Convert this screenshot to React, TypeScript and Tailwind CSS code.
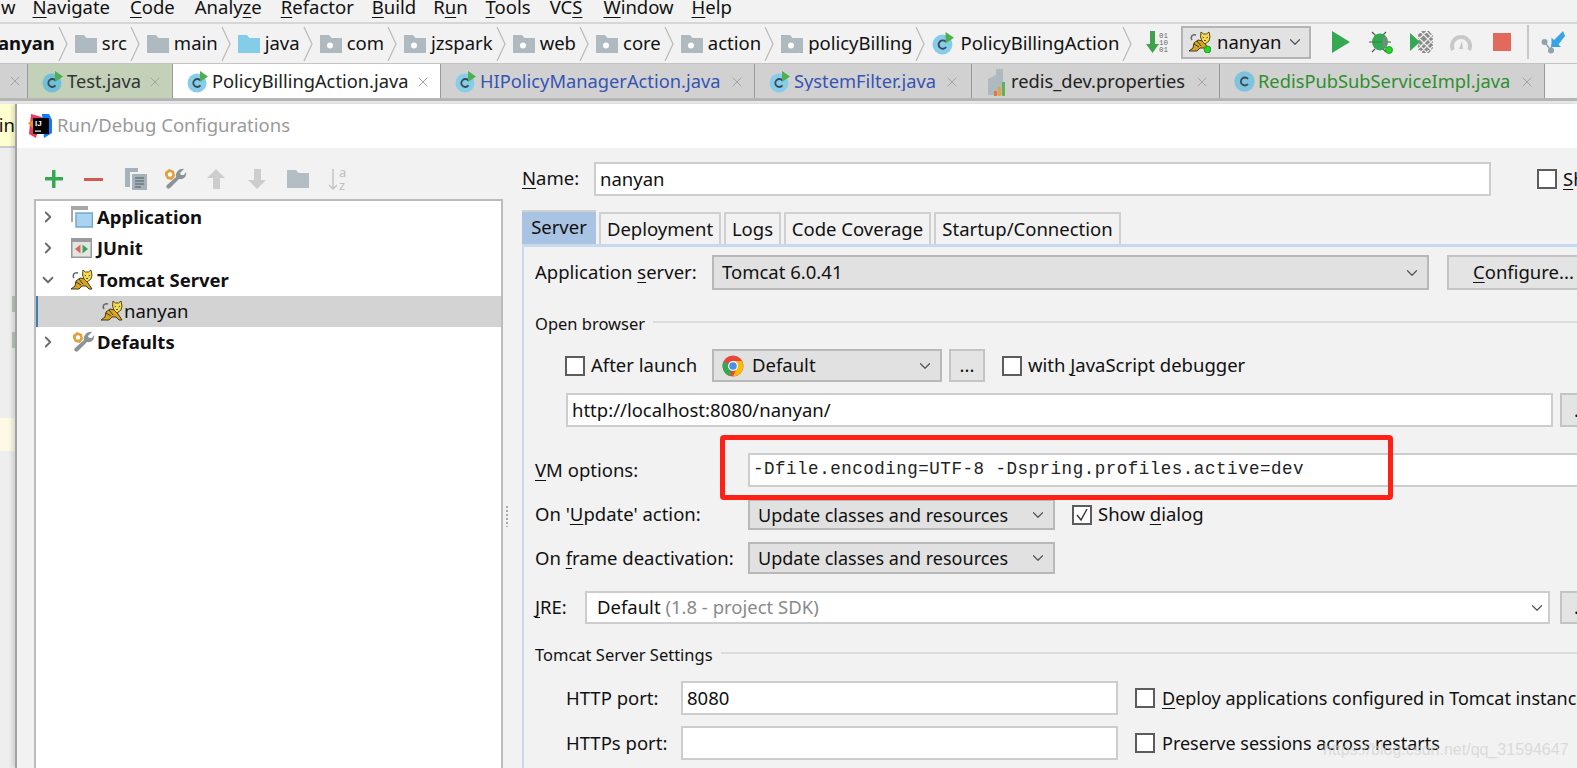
import type { ReactNode } from "react";
import { ChevronDown, ChevronRight, X } from "lucide-react";

const Mn = ({ children }: { children: ReactNode }) => <span className="underline decoration-1 underline-offset-[3px]">{children}</span>;

const ClassIcon = ({ size = 22, muted = false }: { size?: number; muted?: boolean }) => (
    <svg width={size} height={size} viewBox="0 0 22 22" className="shrink-0">
        <circle cx="10" cy="12" r="9.5" fill={muted ? "#6fc0d8" : "#85cdea"} />
        <path d="M13.5 9.6a4 4 0 1 0 0 4.8" fill="none" stroke="#3c4a52" strokeWidth="1.8" />
        <path d="M13 0l8 5.5-8 5.5z" fill="#4caf50" />
    </svg>
);

const PlainClassIcon = () => (
    <svg width="21" height="21" viewBox="0 0 21 21" className="shrink-0">
        <circle cx="10.5" cy="10.5" r="10.2" fill="#7fc4de" />
        <path d="M14 8a4 4 0 1 0 0 5" fill="none" stroke="#3c4a52" strokeWidth="1.8" />
    </svg>
);

const Folder = ({ color = "#aeb9c0" }: { color?: string }) => (
    <svg width="22" height="18" viewBox="0 0 22 18" className="shrink-0">
        <path d="M0 0h9l2.5 3H22v15H0z" fill={color} />
    </svg>
);

const PackageFolder = () => (
    <svg width="22" height="18" viewBox="0 0 22 18" className="shrink-0">
        <path d="M0 0h9l2.5 3H22v15H0z" fill="#aeb9c0" />
        <circle cx="10" cy="10.5" r="3" fill="#fff" />
    </svg>
);

const Tomcat = ({ badge = false }: { badge?: boolean }) => (
    <svg width="22" height="22" viewBox="0 0 22 22" className="shrink-0">
        <path d="M3 9C1 6 3 3 7 4" fill="none" stroke="#666" strokeWidth="1.5" />
        <path d="M0 20l4-3 1-5 4-3 5 1 3 4 4 6h-3l-3-3-4 0-3 3z" fill="#d9a521" stroke="#40391c" strokeWidth="1" />
        <path d="M5 13l5 3M8 10l4 5" stroke="#40391c" strokeWidth="1" />
        <path d="M12 1l2.500 2h3L20 1l1 5-1 4-4 3-3-3-1.500-4z" fill="#f6dc55" stroke="#5a4a10" strokeWidth="1" />
        <path d="M13.500 6l1.500 1M19 6l-1.500 1M15 9.500h2" stroke="#5a4a10" strokeWidth="1" />
        {badge && <circle cx="18.5" cy="18.5" r="3.4" fill="#22d822" stroke="#1a8a1a" strokeWidth="0.8" />}
    </svg>
);

const Wrench = () => (
    <svg width="24" height="24" viewBox="0 0 24 24" className="shrink-0">
        <path d="M21 2l-4 4 1 2 3 0 2-3c1 4-2 8-7 7L7 21c-2 2-5-1-3-3l9-8c-1-4 3-9 8-8z" fill="#8b9298" />
        <path d="M2 5l4-3 5 2 1 5-3 4-5-1-2-4z" fill="#e0a13d" />
        <circle cx="7" cy="7.5" r="2.2" fill="#fff" />
    </svg>
);

const Crumb = ({ icon, label, bold = false }: { icon?: ReactNode; label: string; bold?: boolean }) => (
    <div className="flex shrink-0 items-center">
        {icon}
        <span className={bold ? "ml-[5px] font-bold" : "ml-[5px]"}>{label}</span>
        <svg width="10" height="36" viewBox="0 0 10 36" className="mr-[7px] ml-[3px] shrink-0">
            <path d="M1 1l8 17-8 17" fill="none" stroke="#b9b9b9" strokeWidth="1.2" />
        </svg>
    </div>
);

const EditorTab = ({ width, bg = "bg-[#d1d1d1]", color = "text-[#222]", icon, label }: { width: string; bg?: string; color?: string; icon: ReactNode; label: string }) => (
    <div className={`flex h-full shrink-0 items-center border-r border-r-[#9a9a9a] pt-[1px] pl-[14px] ${width} ${bg}`}>
        {icon}
        <span className={`ml-[3px] whitespace-nowrap ${color}`}>{label}</span>
        <X size={16} strokeWidth={1.5} className="mr-[9px] ml-auto shrink-0 text-[#a4a4a4]" />
    </div>
);

const Checkbox = ({ checked = false }: { checked?: boolean }) => (
    <span className="flex h-[20px] w-[20px] shrink-0 items-center justify-center border-2 border-[#5c5c5c] bg-white">
        {checked && (
            <svg width="14" height="14" viewBox="0 0 14 14">
                <path d="M2 7l4 5 6-11" fill="none" stroke="#333" strokeWidth="1.4" />
            </svg>
        )}
    </span>
);

const Combo = ({ width, height, children }: { width: string; height: string; children: ReactNode }) => (
    <div className={`flex shrink-0 items-center justify-between border-2 border-[#b8b8b8] bg-[#e1e1e1] pr-[6px] pl-[8px] ${width} ${height}`}>
        <div className="flex items-center whitespace-nowrap">{children}</div>
        <ChevronDown size={18} strokeWidth={1.6} className="shrink-0 text-[#555]" />
    </div>
);

const TextBox = ({ className, children }: { className: string; children?: ReactNode }) => (
    <div className={`flex shrink-0 items-center border-2 border-[#cdcdcd] bg-white pl-[4px] whitespace-nowrap ${className}`}>{children}</div>
);

const GrayButton = ({ className, children }: { className: string; children: ReactNode }) => (
    <div className={`flex shrink-0 items-center border-2 border-[#c4c4c4] bg-[#e4e4e4] ${className}`}>{children}</div>
);

const SectionTitle = ({ title, className }: { title: string; className: string }) => (
    <div className={`flex h-[24px] shrink-0 items-center ${className}`}>
        <span className="text-[16.5px] whitespace-nowrap">{title}</span>
        <div className="mt-[-4px] ml-[8px] h-[2px] flex-1 bg-[#dcdcdc]" />
    </div>
);

const TreeRow = ({ open, icon, label }: { open: boolean; icon: ReactNode; label: string }) => (
    <div className="flex h-[31.5px] items-center pl-[3px]">
        {open ? <ChevronDown size={18} strokeWidth={2.4} className="text-[#6a6a6a]" /> : <ChevronRight size={18} strokeWidth={2.4} className="text-[#6a6a6a]" />}
        <div className="ml-[14px] flex w-[26px] justify-start">{icon}</div>
        <span className="font-bold">{label}</span>
    </div>
);

export default function App() {
    return (
        <div className="relative flex h-[768px] w-[1577px] flex-col overflow-hidden bg-[#f2f2f2] font-['Noto_Sans',sans-serif] text-[18.5px] leading-none text-[#111]">
            {/* menu bar */}
            <div className="flex h-[22px] shrink-0 items-center overflow-hidden pb-[7px] pl-[1px] whitespace-nowrap">
                <span>w</span>
                <span className="ml-[17px]"><Mn>N</Mn>avigate</span>
                <span className="ml-[20px]"><Mn>C</Mn>ode</span>
                <span className="ml-[20px]">Analy<Mn>z</Mn>e</span>
                <span className="ml-[19px]"><Mn>R</Mn>efactor</span>
                <span className="ml-[18px]"><Mn>B</Mn>uild</span>
                <span className="ml-[17px]">R<Mn>u</Mn>n</span>
                <span className="ml-[18px]"><Mn>T</Mn>ools</span>
                <span className="ml-[19px]">VC<Mn>S</Mn></span>
                <span className="ml-[21px]"><Mn>W</Mn>indow</span>
                <span className="ml-[18px]"><Mn>H</Mn>elp</span>
            </div>

            {/* navigation bar */}
            <div className="flex h-[41px] shrink-0 items-center overflow-hidden border-t-2 border-t-[#d6d6d6]">
                <div className="ml-[-19px] flex items-center">
                    <Crumb label="nanyan" bold />
                    <Crumb icon={<Folder />} label="src" />
                    <Crumb icon={<Folder />} label="main" />
                    <Crumb icon={<Folder color="#84cde9" />} label="java" />
                    <Crumb icon={<PackageFolder />} label="com" />
                    <Crumb icon={<PackageFolder />} label="jzspark" />
                    <Crumb icon={<PackageFolder />} label="web" />
                    <Crumb icon={<PackageFolder />} label="core" />
                    <Crumb icon={<PackageFolder />} label="action" />
                    <Crumb icon={<PackageFolder />} label="policyBilling" />
                    <Crumb icon={<ClassIcon size={23} />} label="PolicyBillingAction" />
                </div>
                <div className="absolute top-[23px] right-0 flex h-[38px] items-center pl-[4px]">
                    <svg width="24" height="24" viewBox="0 0 24 24" className="shrink-0">
                        <path d="M4 1h5v13h4L6.500 23 0 14h4z" fill="#3fa34d" />
                        <text x="13" y="8" fontSize="7.500" fontFamily="Liberation Mono" fill="#666">01</text>
                        <text x="13" y="15" fontSize="7.500" fontFamily="Liberation Mono" fill="#666">10</text>
                        <text x="13" y="22" fontSize="7.500" fontFamily="Liberation Mono" fill="#666">01</text>
                    </svg>
                    <div className="ml-[11px] flex h-[33px] w-[130px] items-center border-2 border-[#b4b4b4] bg-[#e2e2e2] pr-[5px] pl-[6px]">
                        <Tomcat badge />
                        <span className="ml-[6px]">nanyan</span>
                        <ChevronDown size={18} strokeWidth={1.6} className="ml-auto text-[#555]" />
                    </div>
                    <svg width="18" height="22" viewBox="0 0 18 22" className="ml-[21px] shrink-0">
                        <path d="M0 0l18 11L0 22z" fill="#35a853" />
                    </svg>
                    <svg width="25" height="24" viewBox="0 0 25 24" className="ml-[19px] shrink-0">
                        <path d="M3 2l4 4M17 2l-4 4M0 12h3M19 12h3M3 22l3-3M17 22l-3-3" stroke="#555" strokeWidth="1.2" />
                        <ellipse cx="11" cy="12" rx="8" ry="8.500" fill="#35a853" />
                        <path d="M3 12h10" stroke="#2a8a44" strokeWidth="1" />
                        <path d="M14 7h3.500v10H14z" fill="#7b8a84" />
                        <circle cx="20" cy="20" r="3.500" fill="#22d822" stroke="#1a8a1a" strokeWidth="0.8" />
                    </svg>
                    <svg width="23" height="22" viewBox="0 0 23 22" className="ml-[16px] shrink-0">
                        <path d="M8 3l4-3 7 0 4 5v12l-4 5h-7l-4-3z" fill="#8b8b8b" />
                        <path d="M6 4l16 16M10 0l13 13M16 0l7 7M6 10l11 12M6 16l6 6M22 4L6 20M23 9L10 22M23 15l-7 7M17 0L6 11M11 0L6 5" stroke="#f2f2f2" strokeWidth="1.100" />
                        <path d="M0 2l10 9-10 9z" fill="#35a853" />
                    </svg>
                    <svg width="22" height="18" viewBox="0 0 22 18" className="ml-[17px] shrink-0">
                        <path d="M3 17a9 9 0 1 1 16 0" fill="none" stroke="#c8c8c8" strokeWidth="4" />
                        <path d="M9 16l3-8 1 8z" fill="#c8c8c8" />
                    </svg>
                    <div className="ml-[21px] h-[18px] w-[18px] bg-[#e2695c]" />
                    <div className="ml-[16px] h-[34px] w-[2px] bg-[#c8c8c8]" />
                    <svg width="24" height="24" viewBox="0 0 24 24" className="mr-[12px] ml-[12px] shrink-0">
                        <circle cx="3.500" cy="12" r="3" fill="#8fa3ad" />
                        <circle cx="10" cy="20.500" r="3" fill="#8fa3ad" />
                        <path d="M3.500 12L10 20.500 11 14" fill="none" stroke="#8fa3ad" strokeWidth="1.400" />
                        <path d="M22 1L13 10l-2.500-2.500V17h9.500l-2.500-2.500L24 6z" fill="#35a5e8" />
                    </svg>
                </div>
            </div>

            {/* editor tabs */}
            <div className="flex h-[35px] shrink-0 items-stretch border-t border-t-[#c4c4c4] text-[18.3px]">
                <div className="flex w-[28px] shrink-0 items-center justify-end border-r border-r-[#9a9a9a] bg-[#d1d1d1] pr-[4px]">
                    <X size={16} strokeWidth={1.5} className="text-[#a4a4a4]" />
                </div>
                <EditorTab width="w-[145px]" bg="bg-[#c2d1b8]" color="text-[#333]" icon={<ClassIcon muted />} label="Test.java" />
                <EditorTab width="w-[268px]" bg="bg-white" icon={<ClassIcon />} label="PolicyBillingAction.java" />
                <EditorTab width="w-[314px]" color="text-[#3654b4]" icon={<ClassIcon />} label="HIPolicyManagerAction.java" />
                <div className="flex h-full w-[217px] shrink-0 items-center border-r border-r-[#9a9a9a] bg-[#d1d1d1] pt-[1px] pl-[14px]">
                    <ClassIcon />
                    <span className="ml-[3px] w-[142px] overflow-hidden whitespace-nowrap text-[#3654b4]">SystemFilter.java</span>
                    <X size={16} strokeWidth={1.5} className="ml-[8px] text-[#a4a4a4]" />
                </div>
                <EditorTab
                    width="w-[248px]"
                    icon={
                        <svg width="22" height="28" viewBox="0 0 22 28" className="shrink-0">
                            <path d="M2 11l8-4V1h7v26H2z" fill="#aeb9c0" />
                            <path d="M8 23h3v5H8z" fill="#e8743b" />
                            <path d="M12 19h3v9h-3z" fill="#e8a33b" />
                            <path d="M16 14h3v14h-3z" fill="#5db35d" />
                        </svg>
                    }
                    label="redis_dev.properties"
                />
                <EditorTab width="w-[325px]" color="text-[#2f8f2f]" icon={<PlainClassIcon />} label="RedisPubSubServiceImpl.java" />
                <div className="flex-1" />
            </div>
            <div className="h-[3px] shrink-0 bg-[#b5b5b5]" />
            <div className="h-[3px] shrink-0 bg-[#ebebeb]" />

            <div className="flex min-h-0 flex-1">
                {/* editor sliver behind the dialog */}
                <div className="flex w-[15px] shrink-0 flex-col bg-[#eeeeee]">
                    <div className="flex h-[44px] shrink-0 items-center justify-end overflow-hidden border-b-2 border-b-[#cccccc] bg-[#ffffd0]">
                        <span className="whitespace-nowrap">in</span>
                    </div>
                    <div className="mt-[148px] ml-[12px] h-[16px] w-[3px] shrink-0 bg-[#b9c8b9]" />
                    <div className="mt-[20px] ml-[12px] h-[16px] w-[3px] shrink-0 bg-[#b9c8b9]" />
                    <div className="mt-[70px] h-[33px] shrink-0 bg-[#fdf9e6]" />
                </div>

                {/* dialog */}
                <div className="flex min-w-0 flex-1 flex-col border-l-2 border-l-[#a2a2a2] shadow-[-3px_0_4px_rgba(0,0,0,0.12)]">
                    <div className="flex h-[44px] shrink-0 items-center bg-white pl-[11px]">
                        <svg width="24" height="24" viewBox="0 0 24 24" className="shrink-0">
                            <path d="M3 0l11 3-6 21-7-4z" fill="#f03a5f" />
                            <path d="M0 9l7-4v12z" fill="#f58a2c" />
                            <path d="M14 0h7l3 6v13l-8 5z" fill="#087cfa" />
                            <rect x="5" y="4" width="16" height="16" fill="#000" />
                            <text x="7" y="12" fontSize="8" fontWeight="700" fontFamily="Liberation Sans" fill="#fff">IJ</text>
                            <rect x="7" y="16.500" width="6" height="1.200" fill="#fff" />
                        </svg>
                        <span className="mb-[2px] ml-[5px] text-[18.5px] text-[#9a9a9a]">Run/Debug Configurations</span>
                    </div>

                    <div className="flex min-h-0 flex-1">
                        {/* configurations tree */}
                        <div className="flex w-[486px] shrink-0 flex-col pl-[17px]">
                            <div className="flex h-[51px] shrink-0 items-center pt-[11px] pl-[10px]">
                                <svg width="20" height="20" viewBox="0 0 20 20" className="shrink-0"><path d="M8 1h3.500v7H19v3.500h-7.500V19H8v-7.500H1V8h7z" fill="#35a853" /></svg>
                                <div className="ml-[20px] h-[3px] w-[19px] shrink-0 bg-[#cf5c50]" />
                                <svg width="22" height="24" viewBox="0 0 22 24" className="ml-[22px] shrink-0">
                                    <path d="M0 1h13v4H5v15H0z" fill="#a6b2ba" />
                                    <path d="M7 7h15v16H7z" fill="#a6b2ba" />
                                    <path d="M10 11h9M10 14h9M10 17h9M10 20h6" stroke="#4d5a62" strokeWidth="1.100" />
                                </svg>
                                <div className="ml-[16px]"><Wrench /></div>
                                <svg width="18" height="20" viewBox="0 0 18 20" className="ml-[20px] shrink-0"><path d="M9 0l9 9h-5v11H6V9H0z" fill="#cdcdcd" /></svg>
                                <svg width="18" height="20" viewBox="0 0 18 20" className="ml-[23px] shrink-0"><path d="M9 20L0 11h6V0h7v11h5z" fill="#cdcdcd" /></svg>
                                <svg width="22" height="18" viewBox="0 0 22 18" className="ml-[21px] shrink-0"><path d="M0 0h9l2.500 3H22v15H0z" fill="#b3bdc4" /></svg>
                                <svg width="20" height="24" viewBox="0 0 20 24" className="ml-[19px] shrink-0">
                                    <path d="M5 2v20M1 18l4 4 4-4" fill="none" stroke="#c4c4c4" strokeWidth="1.500" />
                                    <text x="11" y="10" fontSize="13" fontFamily="Noto Sans" fill="#bdbdbd">a</text>
                                    <text x="11" y="23" fontSize="13" fontFamily="Noto Sans" fill="#bdbdbd">z</text>
                                </svg>
                            </div>
                            <div className="min-h-0 flex-1 border-2 border-b-0 border-[#bcbcbc] bg-white">
                                <TreeRow
                                    open={false}
                                    label="Application"
                                    icon={
                                        <svg width="22" height="22" viewBox="0 0 22 22">
                                            <path d="M0 0h17v4H0zM0 4h2v12H0z" fill="#a8a8a8" />
                                            <rect x="5" y="7" width="16.500" height="14" fill="#a8d4f0" stroke="#6ea6c8" strokeWidth="1.400" />
                                        </svg>
                                    }
                                />
                                <TreeRow
                                    open={false}
                                    label="JUnit"
                                    icon={
                                        <svg width="21" height="20" viewBox="0 0 21 20">
                                            <rect width="21" height="20" fill="#9a9a9a" />
                                            <rect x="1.500" y="4" width="18" height="14.500" fill="#e4e4e4" />
                                            <path d="M9.500 6.500v9L4 11z" fill="#d9695c" />
                                            <path d="M11.500 6.500v9l5.500-4.500z" fill="#35a853" />
                                        </svg>
                                    }
                                />
                                <TreeRow open label="Tomcat Server" icon={<Tomcat />} />
                                <div className="flex h-[31px] items-center border-l-2 border-l-[#3f7fb5] bg-[#d3d3d3] pl-[63px]">
                                    <Tomcat />
                                    <span className="ml-[1px]">nanyan</span>
                                </div>
                                <TreeRow open={false} label="Defaults" icon={<Wrench />} />
                            </div>
                        </div>

                        {/* splitter */}
                        <div className="flex w-[19px] shrink-0 pt-[357px] pl-[2px]">
                            <div className="h-[22px] w-[5px] bg-[radial-gradient(#aaaaaa_1px,transparent_1px)] bg-[length:4px_4px]" />
                        </div>

                        {/* server settings */}
                        <div className="flex min-w-0 flex-1 flex-col">
                            <div className="mt-[14px] flex h-[34px] shrink-0 items-center">
                                <span className="w-[72px] shrink-0 pb-[2px]"><Mn>N</Mn>ame:</span>
                                <TextBox className="h-[34px] w-[897px]">nanyan</TextBox>
                                <div className="ml-[46px]"><Checkbox /></div>
                                <span className="ml-[6px] whitespace-nowrap"><Mn>S</Mn>hare</span>
                            </div>
                            <div className="mt-[14px] flex h-[34px] shrink-0 items-end gap-[3px]">
                                <div className="flex h-[34px] w-[74px] shrink-0 items-center justify-center border-t-2 border-t-[#d0d0d0] bg-[#a9c3e2] pb-[2px]">Server</div>
                                <div className="flex h-[32px] w-[122px] shrink-0 items-center justify-center border-x-2 border-t-2 border-[#d0d0d0]">Deployment</div>
                                <div className="flex h-[32px] w-[57px] shrink-0 items-center justify-center border-x-2 border-t-2 border-[#d0d0d0]">Logs</div>
                                <div className="flex h-[32px] w-[147px] shrink-0 items-center justify-center border-x-2 border-t-2 border-[#d0d0d0]">Code Coverage</div>
                                <div className="flex h-[32px] w-[187px] shrink-0 items-center justify-center border-x-2 border-t-2 border-[#d0d0d0]">Startup/Connection</div>
                            </div>
                            <div className="h-[3px] shrink-0 bg-[#c6d9ef]" />
                            <div className="flex min-h-0 flex-1 flex-col border-l-2 border-l-[#c6d9ef] pl-[11px] whitespace-nowrap">
                                <div className="mt-[8px] flex h-[35px] shrink-0 items-center">
                                    <span className="w-[177px] shrink-0">Application <Mn>s</Mn>erver:</span>
                                    <Combo width="w-[717px]" height="h-[35px]">Tomcat 6.0.41</Combo>
                                    <GrayButton className="ml-[18px] h-[35px] w-[140px] pl-[24px]"><span><Mn>C</Mn>onfigure...</span></GrayButton>
                                </div>
                                <SectionTitle title="Open browser" className="mt-[22px]" />
                                <div className="mt-[13px] flex h-[33px] shrink-0 items-center">
                                    <div className="ml-[30px]"><Checkbox /></div>
                                    <span className="ml-[6px] w-[121px] shrink-0">After launch</span>
                                    <Combo width="w-[230px]" height="h-[33px]">
                                        <svg width="22" height="22" viewBox="0 0 22 22" className="mr-[8px] shrink-0">
                                            <circle cx="11" cy="11" r="10.500" fill="#e8453c" />
                                            <path d="M11 11L1.500 6.500A10.500 10.500 0 0 0 8 21z" fill="#34a853" />
                                            <path d="M11 6h9a10.500 10.500 0 0 1-9 15.500L15 12z" fill="#fbbc05" />
                                            <circle cx="11" cy="11" r="5" fill="#fff" />
                                            <circle cx="11" cy="11" r="3.800" fill="#4a8ee8" />
                                        </svg>
                                        Default
                                    </Combo>
                                    <GrayButton className="ml-[7px] h-[33px] w-[36px] justify-center">...</GrayButton>
                                    <div className="ml-[17px]"><Checkbox /></div>
                                    <span className="ml-[6px]">with <Mn>J</Mn>avaScript debugger</span>
                                </div>
                                <div className="mt-[11px] flex h-[34px] shrink-0 items-center pl-[31px]">
                                    <TextBox className="h-[34px] w-[987px]">http://localhost:8080/nanyan/</TextBox>
                                    <GrayButton className="ml-[7px] h-[34px] w-[40px] pl-[12px]">...</GrayButton>
                                </div>
                                <div className="relative mt-[26px] flex h-[34px] shrink-0 items-center">
                                    <span className="w-[213px] shrink-0"><Mn>V</Mn>M options:</span>
                                    <div className="flex h-[34px] w-[900px] shrink-0 items-center border-2 border-[#cdcdcd] bg-white pl-[3px] font-['Liberation_Mono',monospace] text-[17.5px] tracking-[0.52px] text-[#222]">
                                        -Dfile.encoding=UTF-8 -Dspring.profiles.active=dev
                                    </div>
                                    <div className="absolute top-[-18px] left-[185px] h-[65px] w-[673px] rounded-[4px] border-[5px] border-[#ff2016]" />
                                </div>
                                <div className="mt-[12px] flex h-[31px] shrink-0 items-center">
                                    <span className="w-[213px] shrink-0">On '<Mn>U</Mn>pdate' action:</span>
                                    <Combo width="w-[307px]" height="h-[31px]"><span className="text-[18px]">Update classes and resources</span></Combo>
                                    <div className="ml-[17px]"><Checkbox checked /></div>
                                    <span className="ml-[6px]">Show <Mn>d</Mn>ialog</span>
                                </div>
                                <div className="mt-[12px] flex h-[32px] shrink-0 items-center">
                                    <span className="w-[213px] shrink-0">On <Mn>f</Mn>rame deactivation:</span>
                                    <Combo width="w-[307px]" height="h-[32px]"><span className="text-[18px]">Update classes and resources</span></Combo>
                                </div>
                                <div className="mt-[17px] flex h-[33px] shrink-0 items-center">
                                    <span className="w-[50px] shrink-0"><Mn>J</Mn>RE:</span>
                                    <div className="flex h-[33px] w-[965px] shrink-0 items-center justify-between border-2 border-[#cdcdcd] bg-white pr-[2px] pl-[10px]">
                                        <span>Default <span className="text-[#8a8a8a]">(1.8 - project SDK)</span></span>
                                        <ChevronDown size={18} strokeWidth={1.6} className="text-[#555]" />
                                    </div>
                                    <GrayButton className="ml-[10px] h-[33px] w-[40px] pl-[12px]">...</GrayButton>
                                </div>
                                <SectionTitle title="Tomcat Server Settings" className="mt-[19px]" />
                                <div className="mt-[14px] flex h-[34px] shrink-0 items-center pl-[31px]">
                                    <span className="w-[115px] shrink-0">HTTP port:</span>
                                    <TextBox className="h-[34px] w-[437px]">8080</TextBox>
                                    <div className="ml-[17px]"><Checkbox /></div>
                                    <span className="ml-[7px] text-[18px]"><Mn>D</Mn>eploy applications configured in Tomcat instance</span>
                                </div>
                                <div className="mt-[11px] flex h-[34px] shrink-0 items-center pl-[31px]">
                                    <span className="w-[115px] shrink-0">HTTPs port:</span>
                                    <TextBox className="h-[34px] w-[437px]" />
                                    <div className="ml-[17px]"><Checkbox /></div>
                                    <span className="ml-[7px] text-[18px]">Preserve sessions across restarts</span>
                                </div>
                            </div>
                        </div>
                    </div>
                </div>
            </div>

            <span className="absolute top-[742px] left-[1323px] font-['Liberation_Sans',sans-serif] text-[16px] text-[#cfcfcf]/70">https://blog.csdn.net/qq_31594647</span>
        </div>
    );
}
